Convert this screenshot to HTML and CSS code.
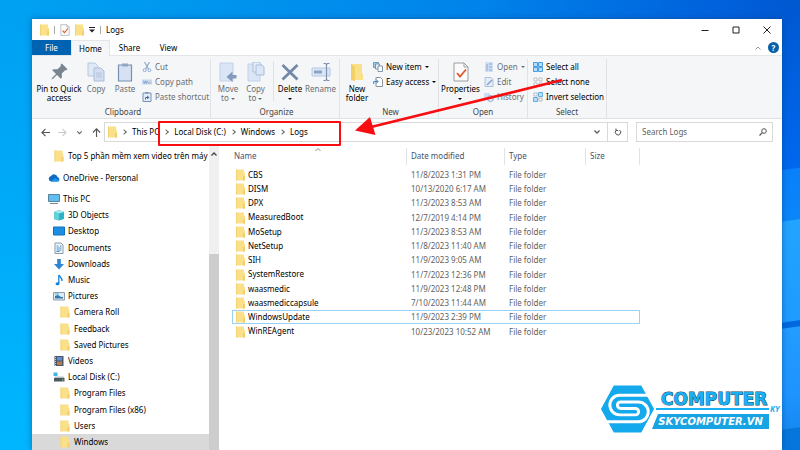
FILE: index.html
```html
<!DOCTYPE html>
<html lang="en">
<head>
<meta charset="utf-8">
<title>Logs</title>
<link rel="stylesheet" href="styles.css">
</head>
<body>
<svg class="defs" aria-hidden="true">
  <symbol id="folder" viewBox="0 0 9 12"><path d="M0 .5h8v3l1 .5v7.500H0z" fill="#fbe08a"/><path d="M0 .5h1v11H0z" fill="#f3d37a"/><path d="M7 7h2v4.500H7z" fill="#f2cf6b"/></symbol>
  <symbol id="doc-check" viewBox="0 0 16 20"><path d="M1 1h10l4 4v14H1z" fill="#fbfbfb" stroke="#9a9da2"/><path d="M11 1v4h4" fill="none" stroke="#9a9da2"/><path d="M4 11l3 3.500 6-7" fill="none" stroke="#e4572e" stroke-width="1.800"/></symbol>
  <symbol id="pages" viewBox="0 0 18 20"><path d="M1 1h7l3 3v10H1z" fill="#dfe8f5" stroke="#b7c8e0"/><path d="M7 6h7l3 3v10H7z" fill="#d3dff0" stroke="#a9bdda"/><path d="M9 11h6M9 13h6M9 15h6" stroke="#b4c5df"/></symbol>
</svg>

<main class="window">
  <header class="titlebar">
    <div class="quick">
      <svg class="ic-folder"><use href="#folder"/></svg><span class="bar"></span>
      <svg class="ic-check"><use href="#doc-check"/></svg>
      <svg class="ic-folder"><use href="#folder"/></svg>
      <svg class="ic-more" viewBox="0 0 6 6"><path d="M0 .5h6" stroke="#222"/><path d="M0 2.500h6L3 5.500z" fill="#222"/></svg><span class="bar"></span>
      <h1>Logs</h1>
    </div>
    <div class="controls">
      <button aria-label="Minimize"><svg viewBox="0 0 8 8"><path d="M.5 4.500h7" stroke="#222"/></svg></button>
      <button aria-label="Maximize"><svg viewBox="0 0 8 8"><path d="M1 1h6v6H1z" fill="none" stroke="#222"/></svg></button>
      <button aria-label="Close"><svg viewBox="0 0 8 8"><path d="M.5.5l7 7M7.500.5l-7 7" stroke="#222"/></svg></button>
    </div>
  </header>

  <nav class="tabs" aria-label="Ribbon">
    <button class="file">File</button><button class="active">Home</button><button>Share</button><button>View</button>
    <div class="help">
      <button aria-label="Collapse ribbon"><svg class="ic-s" viewBox="0 0 6 6"><path d="M.5 4.500L3 2l2.500 2.500" fill="none" stroke="#999"/></svg></button>
      <button class="q" aria-label="Help">?</button>
    </div>
  </nav>

  <section class="ribbon">
    <div class="group clipboard">
      <div class="tools">
        <button class="big w-pin"><svg viewBox="0 0 20 20"><g transform="rotate(45 10 10)" fill="#78848f"><path d="M6 2h8v2h-1v5l3 3v1.500H4V12l3-3V4H6z"/><path d="M9.300 13h1.400v6l-.7 1.500-.7-1.500z"/></g></svg><span>Pin to Quick<br>access</span></button>
        <button class="big off w-copy"><svg viewBox="0 0 18 20"><use href="#pages"/></svg><span>Copy</span></button>
        <button class="big off w-paste"><svg viewBox="0 0 16 20"><path d="M1.500 3h13v16h-13z" fill="#d6e2f3" stroke="#7890b4" stroke-width="1.200"/><path d="M5 1.500h6v3H5z" fill="#93a7c5"/></svg><span>Paste</span></button>
        <div class="stack">
          <button class="off"><svg viewBox="0 0 10 10"><path d="M2.500 0l4 7M7.500 0l-4 7" stroke="#91a8c9" stroke-width="1.200"/><circle cx="2.700" cy="8.200" r="1.500" fill="none" stroke="#8fb0dc"/><circle cx="7.300" cy="8.200" r="1.500" fill="none" stroke="#8fb0dc"/></svg>Cut</button>
          <button class="off"><svg viewBox="0 0 10 10"><path d="M0 2.500h10v5H0z" fill="#c6d6ee"/><path d="M1.500 4l1 2.500 1-2.500 1 2.500 1-2.500M6.500 6h2" fill="none" stroke="#7590b8" stroke-width=".7"/></svg>Copy path</button>
          <button class="off"><svg viewBox="0 0 10 10"><path d="M1 1h8v8.500H1z" fill="#e4edf9" stroke="#7890b4"/><path d="M3.500 0h3v1.500h-3z" fill="#7890b4"/><path d="M3.500 7.500V5.500h2" fill="none" stroke="#456aa5"/><path d="M5 3.500l2.500 2L5 7.300z" fill="#456aa5"/></svg>Paste shortcut</button>
        </div>
      </div>
      <h2>Clipboard</h2>
    </div>

    <div class="group organize">
      <div class="tools">
        <button class="big off w-move"><svg viewBox="0 0 18 20"><path d="M1 1h13v18H1z" fill="#dae5f5" stroke="#c3d2e8"/><path d="M17.500 13h-4v-3.500L7.500 15l6 5v-3.500h4z" fill="#8399bd"/></svg><span>Move<br>to <i></i></span></button>
        <button class="big off w-copyto"><svg viewBox="0 0 18 20"><path d="M1 2h12v17H1z" fill="#dae5f5" stroke="#c3d2e8"/><path d="M6 0h6l2 2v8H6z" fill="#e7eef9" stroke="#aabddb"/><path d="M9 3h6l2 2v8H9z" fill="#dce6f5" stroke="#aabddb"/></svg><span>Copy<br>to <i></i></span></button>
        <span class="split"></span>
        <button class="big w-delete"><svg viewBox="0 0 18 20"><path d="M1.500 3l15 14.500M16.500 3l-15 14.500" stroke="#7389a8" stroke-width="2.800"/></svg><span>Delete<br><i></i></span></button>
        <button class="big off w-rename"><svg viewBox="0 0 20 20"><path d="M1 6h18v8H1z" fill="#dbe6f5" stroke="#b6c8e1"/><path d="M3 8.500h8v3H3z" fill="#8ca4ca"/><path d="M12.500 1.500h2l1 1 1-1h2M12.500 18.500h2l1-1 1 1h2M15.500 2.500v15" fill="none" stroke="#7d91af" stroke-width="1.200"/></svg><span>Rename</span></button>
      </div>
      <h2>Organize</h2>
    </div>

    <div class="group new">
      <div class="tools">
        <button class="big w-new"><svg viewBox="0 0 14 20"><path d="M1 2h11v9l1 1v6H1z" fill="#fbe08a"/><path d="M1 2l4 3v14l-4-1z" fill="#f3cf68"/></svg><span>New<br>folder</span></button>
        <div class="stack">
          <button><svg viewBox="0 0 10 10"><path d="M.5.5h5v5h-5z" fill="#9fcfe8" stroke="#6f9dba"/><path d="M2.500 2h4v5h-4z" fill="#e6f2fa" stroke="#7c95ad"/><path d="M5 4h4.500v5.500H5z" fill="#fff" stroke="#8496a9"/></svg>New item <i></i></button>
          <button><svg viewBox="0 0 10 10"><path d="M3 .5h4.500l2 2v7H3z" fill="#fff" stroke="#8b949e"/><path d="M.7 7V4.500h4M3.200 2.500l2 2-2 2" fill="none" stroke="#3c82c8"/></svg>Easy access <i></i></button>
        </div>
      </div>
      <h2>New</h2>
    </div>

    <div class="group open">
      <div class="tools">
        <button class="big w-prop"><svg viewBox="0 0 16 20"><use href="#doc-check"/></svg><span>Properties<br><i></i></span></button>
        <div class="stack">
          <button class="off"><svg viewBox="0 0 10 10"><path d="M1 0h8v10H1z" fill="#d0dff3"/><path d="M3 2v7M5 2h3M5 5h3M5 8h3" stroke="#8da5ca"/></svg>Open <i></i></button>
          <button class="off"><svg viewBox="0 0 10 10"><path d="M1 .5h6l2 2v7H1z" fill="#e5edf8" stroke="#adc0db"/><path d="M3 8l5-5" stroke="#83a3d2" stroke-width="1.500"/></svg>Edit</button>
          <button class="off"><svg viewBox="0 0 10 10"><path d="M0 1h6v6H0z" fill="#cfddf2"/><circle cx="6.500" cy="6.500" r="3" fill="#e5edf8" stroke="#8da9d6"/><path d="M6.500 4.500v2H8" fill="none" stroke="#6d8fc5" stroke-width=".8"/></svg>History</button>
        </div>
      </div>
      <h2>Open</h2>
    </div>

    <div class="group select">
      <div class="tools">
        <div class="stack">
          <button><svg viewBox="0 0 10 10"><path d="M.5.5h4v4h-4zM5.500.5h4v4h-4zM.5 5.500h4v4h-4zM5.500 5.500h4v4h-4z" fill="#b7defb" stroke="#3c94dc" stroke-width=".9"/></svg>Select all</button>
          <button><svg viewBox="0 0 10 10"><path d="M1 1h3v3H1zM6 1h3v3H6zM1 6h3v3H1zM6 6h3v3H6z" fill="#fff" stroke="#b5b9be" stroke-width=".9"/></svg>Select none</button>
          <button><svg viewBox="0 0 10 10"><path d="M1 1h3v3H1zM6 6h3v3H6z" fill="#fff" stroke="#a9b3bd" stroke-width=".9"/><path d="M5.500.5h4v4h-4zM.5 5.500h4v4h-4z" fill="#b7defb" stroke="#58a5e0" stroke-width=".9"/></svg>Invert selection</button>
        </div>
      </div>
      <h2>Select</h2>
    </div>
    <svg class="arrow" viewBox="0 0 210 64" aria-hidden="true"><path d="M207 4L16 51" stroke="#f80d10" stroke-width="2.600"/><path d="M0 54.500L15 41 20.500 59z" fill="#f80d10"/></svg>
  </section>

  <section class="address">
    <div class="history">
      <button aria-label="Back"><svg viewBox="0 0 8 8"><path d="M8 4H.8M4 .8L.8 4 4 7.200" fill="none" stroke="#555"/></svg></button>
      <button aria-label="Forward"><svg viewBox="0 0 8 8"><path d="M0 4h7.200M4 .8L7.200 4 4 7.200" fill="none" stroke="#ccc"/></svg></button>
      <button aria-label="Recent locations"><svg viewBox="0 0 8 8"><path d="M2 3l2 2 2-2" fill="none" stroke="#666"/></svg></button>
      <button aria-label="Up"><svg viewBox="0 0 8 8"><path d="M4 8V.8M.8 4L4 .8 7.200 4" fill="none" stroke="#555"/></svg></button>
    </div>
    <div class="path">
      <svg class="ic-folder"><use href="#folder"/></svg>
      <b></b><a href="#">This PC</a>
      <b></b><a href="#">Local Disk (C:)</a>
      <b></b><a href="#">Windows</a>
      <b></b><a href="#">Logs</a>
      <span class="marker"></span>
      <button class="drop" aria-label="Previous locations"><svg viewBox="0 0 8 8"><path d="M1.500 2.500L4 5.200l2.500-2.700" fill="none" stroke="#555" stroke-width="1.200"/></svg></button>
      <button class="refresh" aria-label="Refresh"><svg viewBox="0 0 8 8"><path d="M5.500 2A2.700 2.700 0 1 1 2.300 2.200M2 .5v2h2.200" fill="none" stroke="#555"/></svg></button>
    </div>
    <label class="search"><input type="search" placeholder="Search Logs" aria-label="Search Logs"><svg viewBox="0 0 8 8"><circle cx="5" cy="3" r="2.300" fill="none" stroke="#555"/><path d="M3.300 4.700L.5 7.500" stroke="#555" stroke-width="1.200"/></svg></label>
  </section>

  <section class="content">
    <nav class="tree" aria-label="Folders">
      <a href="#" class="lead"><svg><use href="#folder"/></svg><span>Top 5 phần mềm xem video trên máy tính</span></a>
      <a href="#" class="l0 cloud"><svg viewBox="0 0 12 12"><path d="M3 9.500a2.800 2.800 0 0 1 0-5.500 3.600 3.600 0 0 1 6.500 1A2.400 2.400 0 0 1 10 9.500z" fill="#0f6cc4"/><path d="M3 9.500L7 6l4.500 2.500a2 2 0 0 1-1.500 1z" fill="#1e96ec"/></svg><span>OneDrive - Personal</span></a>
      <div class="rows">
        <a href="#" class="l0"><svg viewBox="0 0 12 12"><path d="M.5 1.500h11v7H.5z" fill="#62bdf0" stroke="#56849f"/><path d="M2 10.500h8" stroke="#74889a"/></svg><span>This PC</span></a>
        <a href="#" class="l1"><svg viewBox="0 0 12 12"><path d="M1 3l5-2 5 2v7l-5 1.500L1 10z" fill="#2ab3c6"/><path d="M1 3l5 1.500L11 3 6 1z" fill="#a5e8ee"/><path d="M1 3l5 1.500v7L1 10z" fill="#64d0da"/></svg><span>3D Objects</span></a>
        <a href="#" class="l1"><svg viewBox="0 0 12 12"><path d="M.5 2h11v8H.5z" fill="#1d8fe2" stroke="#1471b9"/></svg><span>Desktop</span></a>
        <a href="#" class="l1"><svg viewBox="0 0 12 12"><path d="M2 1h6l2 2v8.500H2z" fill="#f3f7fa" stroke="#8c9aa7"/><path d="M3.500 4h2M3.500 6h5M3.500 8h5M3.500 9.500h3M7 4h1.500" stroke="#4a93c9"/></svg><span>Documents</span></a>
        <a href="#" class="l1"><svg viewBox="0 0 12 12"><path d="M4.200 1h3.600v5H11l-5 5.500L1 6h3.200z" fill="#2f83d3"/></svg><span>Downloads</span></a>
        <a href="#" class="l1"><svg viewBox="0 0 12 12"><path d="M6 1c.5 2 3.500 2.500 3 6" fill="none" stroke="#1582d8" stroke-width="1.400"/><path d="M5.800 1v8.500" stroke="#1582d8" stroke-width="1.300"/><ellipse cx="4.500" cy="9.800" rx="2" ry="1.500" fill="#1582d8"/></svg><span>Music</span></a>
        <a href="#" class="l1"><svg viewBox="0 0 12 12"><path d="M.5 2.500h11v7.500H.5z" fill="#d9edf9" stroke="#909da8"/><path d="M2 8.500V6l3-1 3 2h2v1.500z" fill="#3978a8"/><path d="M2 4h4" stroke="#58a9de"/></svg><span>Pictures</span></a>
        <a href="#" class="l2"><svg><use href="#folder"/></svg><span>Camera Roll</span></a>
        <a href="#" class="l2"><svg><use href="#folder"/></svg><span>Feedback</span></a>
        <a href="#" class="l2"><svg><use href="#folder"/></svg><span>Saved Pictures</span></a>
        <a href="#" class="l1"><svg viewBox="0 0 12 12"><path d="M1.500 1h9v10h-9z" fill="#4a5568"/><path d="M4 2h5v3.500H4z" fill="#5b90d8"/><path d="M4 6.500h5V10H4z" fill="#bb7d49"/><path d="M2.500 2v9" stroke="#c8ced6" stroke-dasharray="1 1"/></svg><span>Videos</span></a>
        <a href="#" class="l1"><svg viewBox="0 0 12 12"><path d="M1 7h10.500v3.500H1z" fill="#4b565e"/><path d="M1 7l1-1.500h8.500L11.500 7z" fill="#b8c1c8"/><path d="M.5 1.500h4v3.500h-4z" fill="#40b7e3"/><path d="M9 9h1.500" stroke="#6fdf86"/></svg><span>Local Disk (C:)</span></a>
        <a href="#" class="l2"><svg><use href="#folder"/></svg><span>Program Files</span></a>
        <a href="#" class="l2"><svg><use href="#folder"/></svg><span>Program Files (x86)</span></a>
        <a href="#" class="l2"><svg><use href="#folder"/></svg><span>Users</span></a>
        <a href="#" class="l2 current"><svg><use href="#folder"/></svg><span>Windows</span></a>
      </div>
    </nav>
    <div class="scroll"><svg viewBox="0 0 8 8"><path d="M1.500 5.500L4 3l2.500 2.500" fill="none" stroke="#444" stroke-width="1.300"/></svg><div class="thumb"></div></div>
    <div class="files">
      <table>
        <thead><tr><th class="c-name">Name<svg class="sort" viewBox="0 0 8 8"><path d="M1.500 5L4 2.500 6.500 5" fill="none" stroke="#888"/></svg></th><th class="c-date">Date modified</th><th class="c-type">Type</th><th class="c-size">Size</th></tr></thead>
        <tbody>
          <tr><td><svg><use href="#folder"/></svg>CBS</td><td>11/8/2023 1:31 PM</td><td>File folder</td><td></td></tr>
          <tr><td><svg><use href="#folder"/></svg>DISM</td><td>10/13/2020 6:17 AM</td><td>File folder</td><td></td></tr>
          <tr><td><svg><use href="#folder"/></svg>DPX</td><td>11/3/2023 8:53 AM</td><td>File folder</td><td></td></tr>
          <tr><td><svg><use href="#folder"/></svg>MeasuredBoot</td><td>12/7/2019 4:14 PM</td><td>File folder</td><td></td></tr>
          <tr><td><svg><use href="#folder"/></svg>MoSetup</td><td>11/3/2023 8:53 AM</td><td>File folder</td><td></td></tr>
          <tr><td><svg><use href="#folder"/></svg>NetSetup</td><td>11/8/2023 11:40 AM</td><td>File folder</td><td></td></tr>
          <tr><td><svg><use href="#folder"/></svg>SIH</td><td>11/9/2023 9:05 AM</td><td>File folder</td><td></td></tr>
          <tr><td><svg><use href="#folder"/></svg>SystemRestore</td><td>11/7/2023 12:36 PM</td><td>File folder</td><td></td></tr>
          <tr><td><svg><use href="#folder"/></svg>waasmedic</td><td>11/9/2023 12:48 PM</td><td>File folder</td><td></td></tr>
          <tr><td><svg><use href="#folder"/></svg>waasmediccapsule</td><td>7/10/2023 11:44 AM</td><td>File folder</td><td></td></tr>
          <tr class="focus"><td><svg><use href="#folder"/></svg>WindowsUpdate</td><td>11/9/2023 2:39 PM</td><td>File folder</td><td></td></tr>
          <tr><td><svg><use href="#folder"/></svg>WinREAgent</td><td>10/23/2023 10:52 AM</td><td>File folder</td><td></td></tr>
        </tbody>
      </table>
    </div>
  </section>
</main>

<aside class="brand">
  <svg viewBox="0 0 58 50" aria-hidden="true"><path d="M14 1h28l13 24-13 24H14L1 25z" fill="#13a9ec"/><path d="M50 11H20a10 10 0 0 0 0 20h16a3.300 3.300 0 0 0 0-6.600H21a3.300 3.300 0 0 1 0-6.600h18a10 10 0 0 1 0 20.200H6" fill="none" stroke="#fff" stroke-width="3"/></svg>
  <div class="words">
    <strong>COMPUTER</strong>
    <span class="line"><em>KY</em></span>
    <span class="site">SKYCOMPUTER.VN</span>
  </div>
</aside>
</body>
</html>
```
FILE: styles.css
```css
* { box-sizing: border-box; }
body {
  margin: 0;
  height: 100vh;
  overflow: hidden;
  display: flex;
  position: relative;
  font: 8px/10px "Noto Sans", "Open Sans", sans-serif;
  color: #000;
  background:
    linear-gradient(172deg, #0058d0 0, #0068ee 168px, #0a80f8 169px, #0a86f8 219px, #22a4ff 220px, #1e9bff 319px, #0068e0 320px, #0068e0 325px, #229cff 326px, #1e94ff 393px, #168af2 425px, #0676dc 426px) right / 18px 100% no-repeat,
    linear-gradient(#00a0f2, #00b6ff) left / 32px 100% no-repeat,
    linear-gradient(90deg, #00a0f2 4%, #0096ee 25%, #0083ea 60%, #0061dc 90%, #0058d0);
}
.defs { position: absolute; width: 0; height: 0; }
button { font: inherit; color: inherit; border: 0; padding: 0; margin: 0; background: none; }
a { color: inherit; text-decoration: none; }
h1, h2 { margin: 0; font: inherit; }
svg { display: block; flex: none; }

.window {
  flex: 1;
  margin: 19px 18px 0 32px;
  display: flex;
  flex-direction: column;
  background: #fff;
  box-shadow: 0 0 6px #00408090;
}

.titlebar { display: flex; justify-content: space-between; height: 21px; }
.quick { display: flex; align-items: center; gap: 5px; padding-left: 8px; }
.ic-folder { width: 9px; height: 12px; }
.ic-check { width: 10px; height: 12px; }
.ic-more { width: 6px; height: 6px; }
.bar { width: 1px; height: 8px; background: #aaa; }
.controls { display: flex; }
.controls button { width: 31px; display: grid; place-items: center; }
.controls svg { width: 8px; height: 8px; }

.tabs { display: flex; height: 16px; border-bottom: 1px solid #e3e5e8; }
.tabs > button { width: 39px; }
.tabs .file { background: #0063b1; color: #fff; }
.tabs .active { background: #f5f6f7; border: 1px solid #e3e5e8; border-bottom: 0; height: 16px; }
.help { margin-left: auto; display: flex; align-items: center; gap: 7px; padding-right: 3px; }
.ic-s { width: 6px; height: 6px; }
.q { width: 11px; height: 11px; border-radius: 50%; background: #0a5fa9; color: #fff; font-weight: 700; line-height: 11px; }

.ribbon {
  position: relative;
  display: flex;
  height: 63px;
  padding: 3px 0 0;
  background: #f5f6f7;
  border-bottom: 1px solid #dfe1e4;
}
.group { display: flex; flex-direction: column; border-right: 1px solid #e0e2e5; }
.tools { flex: none; display: flex; height: 46px; }
.group h2 { text-align: center; color: #444; line-height: 13px; }
.clipboard { width: 179px; padding-left: 4px; }
.organize { width: 129px; padding-left: 3px; }
.new { width: 99px; padding-left: 3px; }
.open { width: 89px; }
.select { width: 79px; }
.select .stack { padding-left: 5px; }
.big { flex: none; display: flex; flex-direction: column; align-items: center; gap: 2px; padding-top: 3px; line-height: 9px; white-space: nowrap; }
.big svg { width: 20px; height: 20px; }
.off { color: #6b6e72; }
.w-pin { width: 46px; }
.w-copy { width: 28px; }
.w-paste { width: 30px; }
.w-move { width: 28px; }
.w-copyto { width: 27px; }
.w-delete { width: 30px; }
.w-rename { width: 31px; }
.w-new { width: 28px; }
.w-prop { width: 43px; }
.split { width: 1px; height: 40px; margin: 2px 1px 0 4px; background: #e0e2e5; }
.stack { display: flex; flex-direction: column; padding-left: 2px; }
.stack button { display: flex; align-items: center; gap: 3px; height: 15px; white-space: nowrap; }
.stack svg { width: 10px; height: 10px; }
i { display: inline-block; border: 2px solid transparent; border-top-color: currentColor; border-bottom: 0; vertical-align: middle; }
.arrow { position: absolute; left: 323px; top: 20px; width: 210px; height: 64px; z-index: 2; }

.address { display: flex; height: 27px; padding: 3px 9px 4px 9px; }
.history { display: flex; align-items: center; gap: 8px; width: 63px; }
.history svg { width: 9px; height: 9px; }
.path { position: relative; flex: 1; display: flex; align-items: center; border: 1px solid #d9d9d9; padding-left: 3px; }
.path .ic-folder { margin-right: 2px; }
.path b { width: 4px; height: 4px; margin: 0 6px 0 3px; border: solid #666; border-width: 1px 1px 0 0; transform: rotate(45deg); }
.path a { margin-right: 2px; }
.marker { position: absolute; left: 53px; top: -2px; width: 183px; height: 25px; border: 2px solid #f80d10; border-radius: 1px; }
.path button { align-self: stretch; width: 20px; display: grid; place-items: center; }
.path button svg { width: 8px; height: 8px; }
.path .drop { margin-left: auto; }
.path .refresh { border-left: 1px solid #d9d9d9; }
.search { display: flex; align-items: center; width: 137px; margin-left: 8px; padding: 0 5px; border: 1px solid #d9d9d9; }
.search input { flex: 1; min-width: 0; padding: 0; border: 0; outline: 0; background: none; font: inherit; }
.search input::placeholder { color: #5f5f5f; opacity: 1; }
.search svg { width: 8px; height: 8px; }

.content { flex: 1; display: flex; min-height: 0; }
.tree { width: 177px; display: flex; flex-direction: column; overflow: hidden; }
.tree a { display: flex; align-items: center; gap: 3px; white-space: nowrap; }
.tree svg { width: 12px; height: 12px; }
.tree span { min-width: 0; overflow: hidden; }
.tree .lead { height: 20px; padding-left: 21px; }
.tree .cloud { height: 24px; margin-bottom: 1px; }
.rows { flex: 1; display: flex; flex-direction: column; }
.rows a { flex: 1; }
.l0 { padding-left: 16px; }
.l1 { padding-left: 21px; }
.l2 { padding-left: 27px; }
.current { background: #d9d9d9; }
.scroll { width: 10px; background: #f0f0f0; display: flex; flex-direction: column; align-items: center; }
.scroll svg { width: 8px; height: 8px; margin-top: 4px; }
.thumb { width: 100%; flex: 1; margin-top: 96px; background: #cdcdcd; }
.files { flex: 1; padding-left: 13px; }
table { border-collapse: separate; border-spacing: 0; table-layout: fixed; width: 408px; }
th { position: relative; height: 22px; padding: 0 0 2px 4px; font-weight: 400; text-align: left; color: #3f5470; background: linear-gradient(#e3e3e3, #e3e3e3) right 2px / 1px 17px no-repeat; }
th:first-child { padding-left: 2px; }
.sort { position: absolute; left: 82px; top: 0; width: 8px; height: 8px; }
.c-name { width: 175px; }
.c-date { width: 98px; }
.c-type { width: 81px; }
td { height: 14px; padding: 0 0 0 4px; line-height: 12px; color: #5f5f5f; white-space: nowrap; }
tr:nth-child(4n) td { height: 15px; }
td:first-child { color: #000; }
td svg { display: inline-block; width: 9px; height: 12px; margin-right: 3px; vertical-align: middle; }
.focus { outline: 1px solid #99d1f5; outline-offset: -1px; }

.brand { position: absolute; right: 18px; bottom: 16px; display: flex; width: 182px; }
.brand > svg { width: 57px; height: 50px; }
.words { flex: 1; display: flex; flex-direction: column; padding-top: 7px; margin-left: -5px; }
.words strong { font: 700 17px/16px "DejaVu Sans", sans-serif; color: #18b0f3; -webkit-text-stroke: 1px #1b4664; paint-order: stroke; padding-left: 9px; }
.line { position: relative; width: 113px; border-top: 2px solid #18b0f3; margin: 1px 0 4px 4px; }
.line em { position: absolute; left: 114px; top: -6px; font-weight: 700; color: #18b0f3; }
.site { width: 117px; height: 15px; background: #18a4e2; clip-path: polygon(6px 0, 100% 0, 100% 100%, 0 100%); color: #fff; font: italic 700 10px/15px "DejaVu Sans", sans-serif; text-align: center; }
```
